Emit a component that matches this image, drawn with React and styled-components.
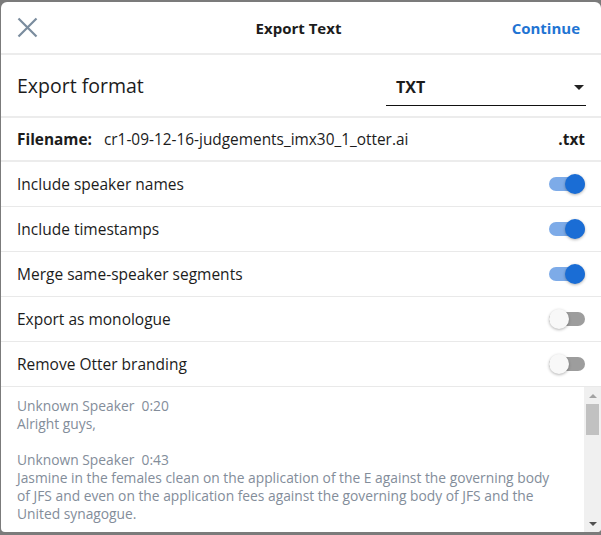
import React, { useState } from "react";
import styled, { createGlobalStyle } from "styled-components";

const GlobalStyle = createGlobalStyle`
    html, body {
        margin: 0;
        padding: 0;
        background: #7b7b7b;
    }
    * {
        box-sizing: border-box;
    }
`;

const Backdrop = styled.div`
    width: 601px;
    height: 535px;
    padding: 2px 0 3px 1px;
    background: #7b7b7b;
    font-family: "Open Sans", Lato, sans-serif;
`;

const Modal = styled.div`
    height: 100%;
    background: #fff;
    border-radius: 6px 6px 4px 4px;
    overflow: hidden;
    display: flex;
    flex-direction: column;
`;

const Header = styled.div`
    height: 53px;
    flex-shrink: 0;
    display: grid;
    grid-template-columns: 1fr auto 1fr;
    align-items: center;
    padding: 0 21px 0 16px;
    border-bottom: 2px solid #ececec;
`;

const CloseButton = styled.button`
    justify-self: start;
    border: 0;
    background: none;
    padding: 0;
    width: 21px;
    height: 21px;
    cursor: pointer;
    display: flex;
`;

const Title = styled.h1`
    margin: 0;
    font-size: 15px;
    font-weight: 700;
    color: #1c1c1c;
`;

const Continue = styled.button`
    justify-self: end;
    border: 0;
    background: none;
    padding: 0;
    font-family: inherit;
    font-size: 15px;
    font-weight: 700;
    color: #1f74d3;
    cursor: pointer;
`;

const FormatRow = styled.div`
    height: 63px;
    flex-shrink: 0;
    display: flex;
    align-items: center;
    justify-content: space-between;
    padding: 0 15px 0 16px;
    border-bottom: 2px solid #ececec;
`;

const FormatLabel = styled.span`
    font-size: 19.5px;
    color: #1c1c1c;
`;

const Select = styled.div`
    width: 200px;
    height: 36px;
    margin-top: 4px;
    display: flex;
    align-items: center;
    justify-content: space-between;
    padding: 0 2px 0 10px;
    border-bottom: 1.5px solid #111;
    font-size: 16px;
    font-weight: 700;
    color: #1c1c1c;
`;

const Caret = styled.span`
    width: 0;
    height: 0;
    border-left: 5px solid transparent;
    border-right: 5px solid transparent;
    border-top: 5px solid #222;
`;

const FileRow = styled.div`
    height: 44px;
    flex-shrink: 0;
    display: flex;
    align-items: center;
    padding: 0 16px;
    border-bottom: 2px solid #ececec;
    font-size: 15.4px;
    color: #1c1c1c;
`;

const FileLabel = styled.span`
    font-weight: 700;
    margin-right: 12px;
`;

const FileName = styled.span`
    flex: 1;
`;

const Ext = styled.span`
    font-weight: 700;
`;

const OptionRow = styled.div`
    height: 45px;
    flex-shrink: 0;
    display: flex;
    align-items: center;
    justify-content: space-between;
    padding: 0 16px;
    border-bottom: 1px solid #e9e9e9;
    font-size: 15.5px;
    color: #1c1c1c;
`;

const Track = styled.button`
    position: relative;
    width: 36px;
    height: 14px;
    padding: 0;
    border: 0;
    border-radius: 7px;
    background: ${(p) => (p.$on ? "#7dabe8" : "#9d9d9d")};
    cursor: pointer;
`;

const Knob = styled.span`
    position: absolute;
    top: -3px;
    left: ${(p) => (p.$on ? "16px" : "0")};
    width: 20px;
    height: 20px;
    border-radius: 50%;
    background: ${(p) => (p.$on ? "#1a6dd5" : "#f8f8f8")};
    box-shadow: 0 1px 3px rgba(0, 0, 0, 0.3);
`;

const PreviewArea = styled.div`
    flex: 1;
    min-height: 0;
    display: flex;
`;

const Preview = styled.div`
    flex: 1;
    overflow: hidden;
    padding: 10px 0 0 16px;
    font-size: 13.8px;
    line-height: 18px;
    color: #838d9a;
`;

const Segment = styled.p`
    margin: 0 0 18px;
    max-width: 548px;
`;

const Scrollbar = styled.div`
    width: 17px;
    flex-shrink: 0;
    background: #f0f0f0;
    display: flex;
    flex-direction: column;
    align-items: center;
`;

const ScrollArrow = styled.div`
    height: 17px;
    width: 100%;
    display: flex;
    align-items: center;
    justify-content: center;

    &::before {
        content: "";
        border-left: 4px solid transparent;
        border-right: 4px solid transparent;
        ${(p) =>
            p.$down
                ? "border-top: 4px solid #505050;"
                : "border-bottom: 4px solid #a3a3a3;"}
    }
`;

const Thumb = styled.div`
    width: 13px;
    height: 31px;
    background: #c1c1c1;
`;

const Spacer = styled.div`
    flex: 1;
`;

const options = [
    { label: "Include speaker names", on: true },
    { label: "Include timestamps", on: true },
    { label: "Merge same-speaker segments", on: true },
    { label: "Export as monologue", on: false },
    { label: "Remove Otter branding", on: false },
];

const segments = [
    { speaker: "Unknown Speaker", time: "0:20", text: "Alright guys," },
    {
        speaker: "Unknown Speaker",
        time: "0:43",
        text: "Jasmine in the females clean on the application of the E against the governing body of JFS and even on the application fees against the governing body of JFS and the United synagogue.",
    },
];

const Toggle = ({ on, onClick }) => (
    <Track $on={on} onClick={onClick}>
        <Knob $on={on} />
    </Track>
);

const App = () => {
    const [toggles, setToggles] = useState(options.map((o) => o.on));

    const flip = (idx) => {
        setToggles(toggles.map((v, i) => (i === idx ? !v : v)));
    };

    return (
        <Backdrop>
            <GlobalStyle />
            <Modal>
                <Header>
                    <CloseButton aria-label="Close">
                        <svg width="21" height="21" viewBox="0 0 21 21">
                            <path d="M1.5 1.5 L19.5 19.5 M19.5 1.5 L1.5 19.5" stroke="#7a8c9e" strokeWidth="2.2" fill="none" />
                        </svg>
                    </CloseButton>
                    <Title>Export Text</Title>
                    <Continue>Continue</Continue>
                </Header>
                <FormatRow>
                    <FormatLabel>Export format</FormatLabel>
                    <Select>
                        TXT
                        <Caret />
                    </Select>
                </FormatRow>
                <FileRow>
                    <FileLabel>Filename:</FileLabel>
                    <FileName>cr1-09-12-16-judgements_imx30_1_otter.ai</FileName>
                    <Ext>.txt</Ext>
                </FileRow>
                {options.map((o, idx) => (
                    <OptionRow key={o.label}>
                        {o.label}
                        <Toggle on={toggles[idx]} onClick={() => flip(idx)} />
                    </OptionRow>
                ))}
                <PreviewArea>
                    <Preview>
                        {segments.map((s, idx) => (
                            <Segment key={idx}>
                                {s.speaker}&nbsp;&nbsp;{s.time}
                                <br />
                                {s.text}
                            </Segment>
                        ))}
                    </Preview>
                    <Scrollbar>
                        <ScrollArrow />
                        <Thumb />
                        <Spacer />
                        <ScrollArrow $down />
                    </Scrollbar>
                </PreviewArea>
            </Modal>
        </Backdrop>
    );
};

export default App;
